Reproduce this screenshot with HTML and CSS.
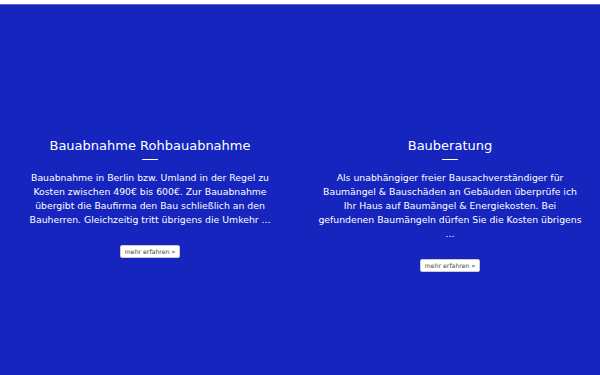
FILE: index.html
```html
<!DOCTYPE html>
<html lang="de">
<head>
    <meta charset="UTF-8">
    <meta name="viewport" content="width=device-width, initial-scale=1.0">
    <title>Bauabnahme</title>
    <link rel="stylesheet" href="styles.css">
</head>
<body>
    <div class="topbar"></div>
    <main class="teaser">
        <section class="box">
            <h2>Bauabnahme Rohbauabnahme</h2>
            <hr>
            <p>Bauabnahme in Berlin bzw. Umland in der Regel zu Kosten zwischen 490€ bis 600€. Zur Bauabnahme übergibt die Baufirma den Bau schließlich an den Bauherren. Gleichzeitig tritt übrigens die Umkehr ...</p>
            <a class="more" href="#">mehr erfahren »</a>
        </section>
        <section class="box">
            <h2>Bauberatung</h2>
            <hr>
            <p>Als unabhängiger freier Bausachverständiger für Baumängel &amp; Bauschäden an Gebäuden überprüfe ich Ihr Haus auf Baumängel &amp; Energiekosten. Bei gefundenen Baumängeln dürfen Sie die Kosten übrigens ...</p>
            <a class="more" href="#">mehr erfahren »</a>
        </section>
    </main>
</body>
</html>
```

FILE: styles.css
```css
*{
    margin: 0;
    padding: 0;
    box-sizing: border-box;
}

html, body{
    height: 100%;
}

body{
    font-family: "DejaVu Sans", Verdana, sans-serif;
    background-color: #1525be;
    color: #fff;
}

.topbar{
    height: 5px;
    background-color: #fff;
    border-bottom: 1px solid #5a66d4;
}

.teaser{
    display: flex;
    padding-top: 132px;
}

.box{
    width: 50%;
    padding: 0 17px;
    display: flex;
    flex-direction: column;
    align-items: center;
    text-align: center;
}

.box h2{
    font-weight: normal;
    font-size: 13px;
    line-height: 18px;
}

.box hr{
    width: 16px;
    border: 0;
    border-top: 1px solid #fff;
    margin: 4px 0 11px;
}

.box p{
    font-size: 9.3px;
    line-height: 14px;
}

.more{
    margin-top: 18px;
    padding: 0 4px;
    height: 13px;
    line-height: 11px;
    font-size: 6.2px;
    color: #444;
    text-decoration: none;
    background-color: #fff;
    border: 1px solid #ccc;
    border-radius: 2px;
}
```
